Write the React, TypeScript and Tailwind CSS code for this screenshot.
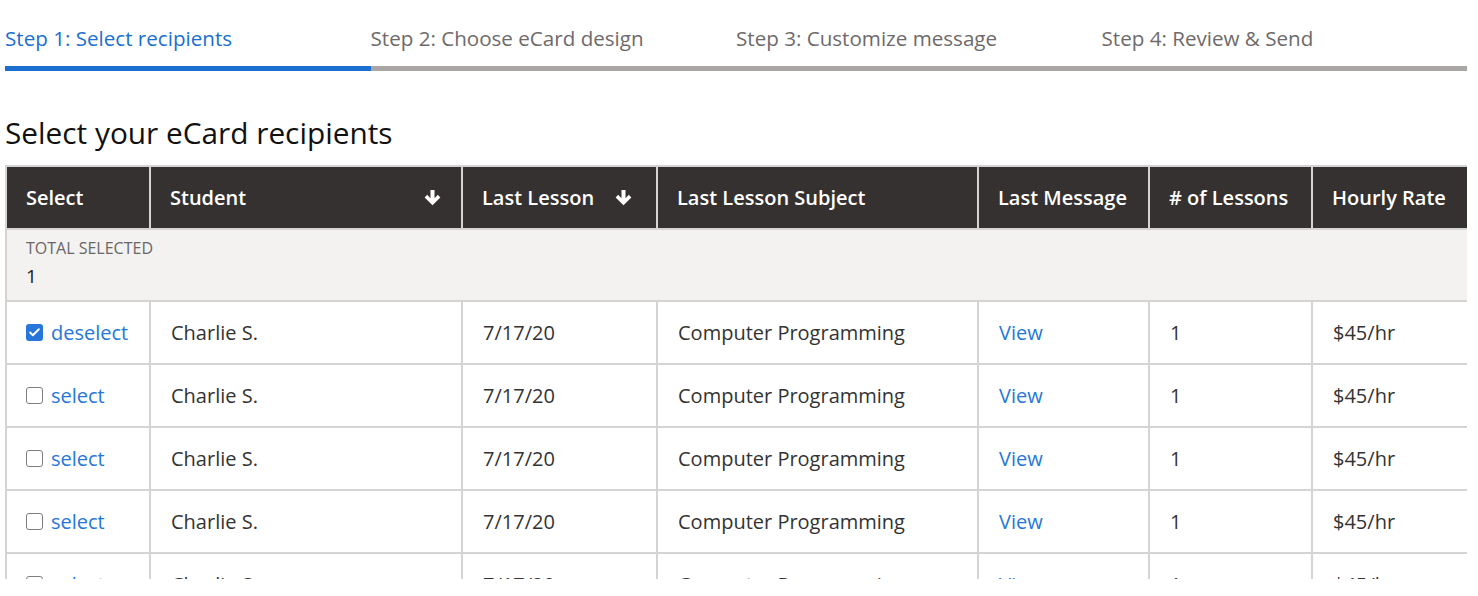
import { Check } from "lucide-react";

const steps = [
  "Step 1: Select recipients",
  "Step 2: Choose eCard design",
  "Step 3: Customize message",
  "Step 4: Review & Send",
];

const columns = [
  { label: "Select", width: "w-[144px]", sort: false },
  { label: "Student", width: "w-[312px]", sort: true },
  { label: "Last Lesson", width: "w-[195px]", sort: true, inline: true },
  { label: "Last Lesson Subject", width: "w-[321px]", sort: false },
  { label: "Last Message", width: "w-[171px]", sort: false },
  { label: "# of Lessons", width: "w-[163px]", sort: false },
  { label: "Hourly Rate", width: "w-[156px]", sort: false },
];

const rows = [
  { selected: true },
  { selected: false },
  { selected: false },
  { selected: false },
  { selected: false },
];

const SortArrow = () => (
  <svg width="17" height="17" viewBox="0 0 16 16" className="shrink-0">
    <path d="M6.1 1h3.8v7.6l3.1-3.1 2.4 2.4L8 15.3 0.6 7.9 3 5.5l3.1 3.1z" fill="white" />
  </svg>
);

const Box = ({ checked }: { checked: boolean }) =>
  checked ? (
    <span className="w-[17px] h-[17px] rounded-[3px] bg-[#2677d9] flex items-center justify-center">
      <Check size={13} strokeWidth={3.5} className="text-white" />
    </span>
  ) : (
    <span className="w-[17px] h-[17px] rounded-[3px] border border-[#7d7d7d] bg-white" />
  );

export default function App() {
  return (
    <div className="pl-[5px] pr-[11px] bg-white font-['Open_Sans',sans-serif] text-[#333]">
      {/* stepper */}
      <div className="grid grid-cols-4">
        {steps.map((s, i) => (
          <div key={s}>
            <div
              className={`pt-[25px] pb-[15px] leading-[26px] text-[20.6px] ${
                i === 0 ? "text-[#1a6fd1]" : "text-[#6e6a6a]"
              }`}
            >
              {s}
            </div>
            <div className={`h-[5px] ${i === 0 ? "bg-[#1a6fd1]" : "bg-[#aaa6a6]"}`} />
          </div>
        ))}
      </div>

      <h1 className="mt-[44px] mb-[14px] text-[29.8px] font-medium leading-[36px] text-[#111]">
        Select your eCard recipients
      </h1>

      <div className="h-[414px] overflow-hidden">
        <table className="table-fixed border-collapse w-[1462px]">
          <thead>
            <tr className="bg-[#353130] text-white">
              {columns.map((c) => (
                <th
                  key={c.label}
                  className={`${c.width} h-[63px] border-2 border-[#d6d4d3] pl-[19px] pr-[20px] text-left font-semibold text-[20px]`}
                >
                  <div className={`flex items-center ${c.inline ? "gap-[21px]" : "justify-between"}`}>
                    <span>{c.label}</span>
                    {c.sort && <SortArrow />}
                  </div>
                </th>
              ))}
            </tr>
          </thead>
          <tbody>
            <tr className="bg-[#f3f2f0]">
              <td colSpan={7} className="h-[72px] border-2 border-[#d6d4d3] pl-[19px] align-top pt-[8px]">
                <div className="text-[16px] leading-[20px] text-[#6a6666] uppercase">Total Selected</div>
                <div className="text-[19px] leading-[24px] mt-[6px] text-[#222]">1</div>
              </td>
            </tr>
            {rows.map((r, i) => (
              <tr key={i} className="text-[20px]">
                <td className="h-[63px] border-2 border-[#d6d4d3] pl-[19px]">
                  <div className="flex items-center gap-[8px]">
                    <Box checked={r.selected} />
                    <span className="text-[#2677d9]">{r.selected ? "deselect" : "select"}</span>
                  </div>
                </td>
                <td className="border-2 border-[#d6d4d3] pl-[20px]">Charlie S.</td>
                <td className="border-2 border-[#d6d4d3] pl-[20px]">7/17/20</td>
                <td className="border-2 border-[#d6d4d3] pl-[20px]">Computer Programming</td>
                <td className="border-2 border-[#d6d4d3] pl-[20px] text-[#2677d9]">View</td>
                <td className="border-2 border-[#d6d4d3] pl-[20px]">1</td>
                <td className="border-2 border-[#d6d4d3] pl-[20px]">$45/hr</td>
              </tr>
            ))}
          </tbody>
        </table>
      </div>
    </div>
  );
}
